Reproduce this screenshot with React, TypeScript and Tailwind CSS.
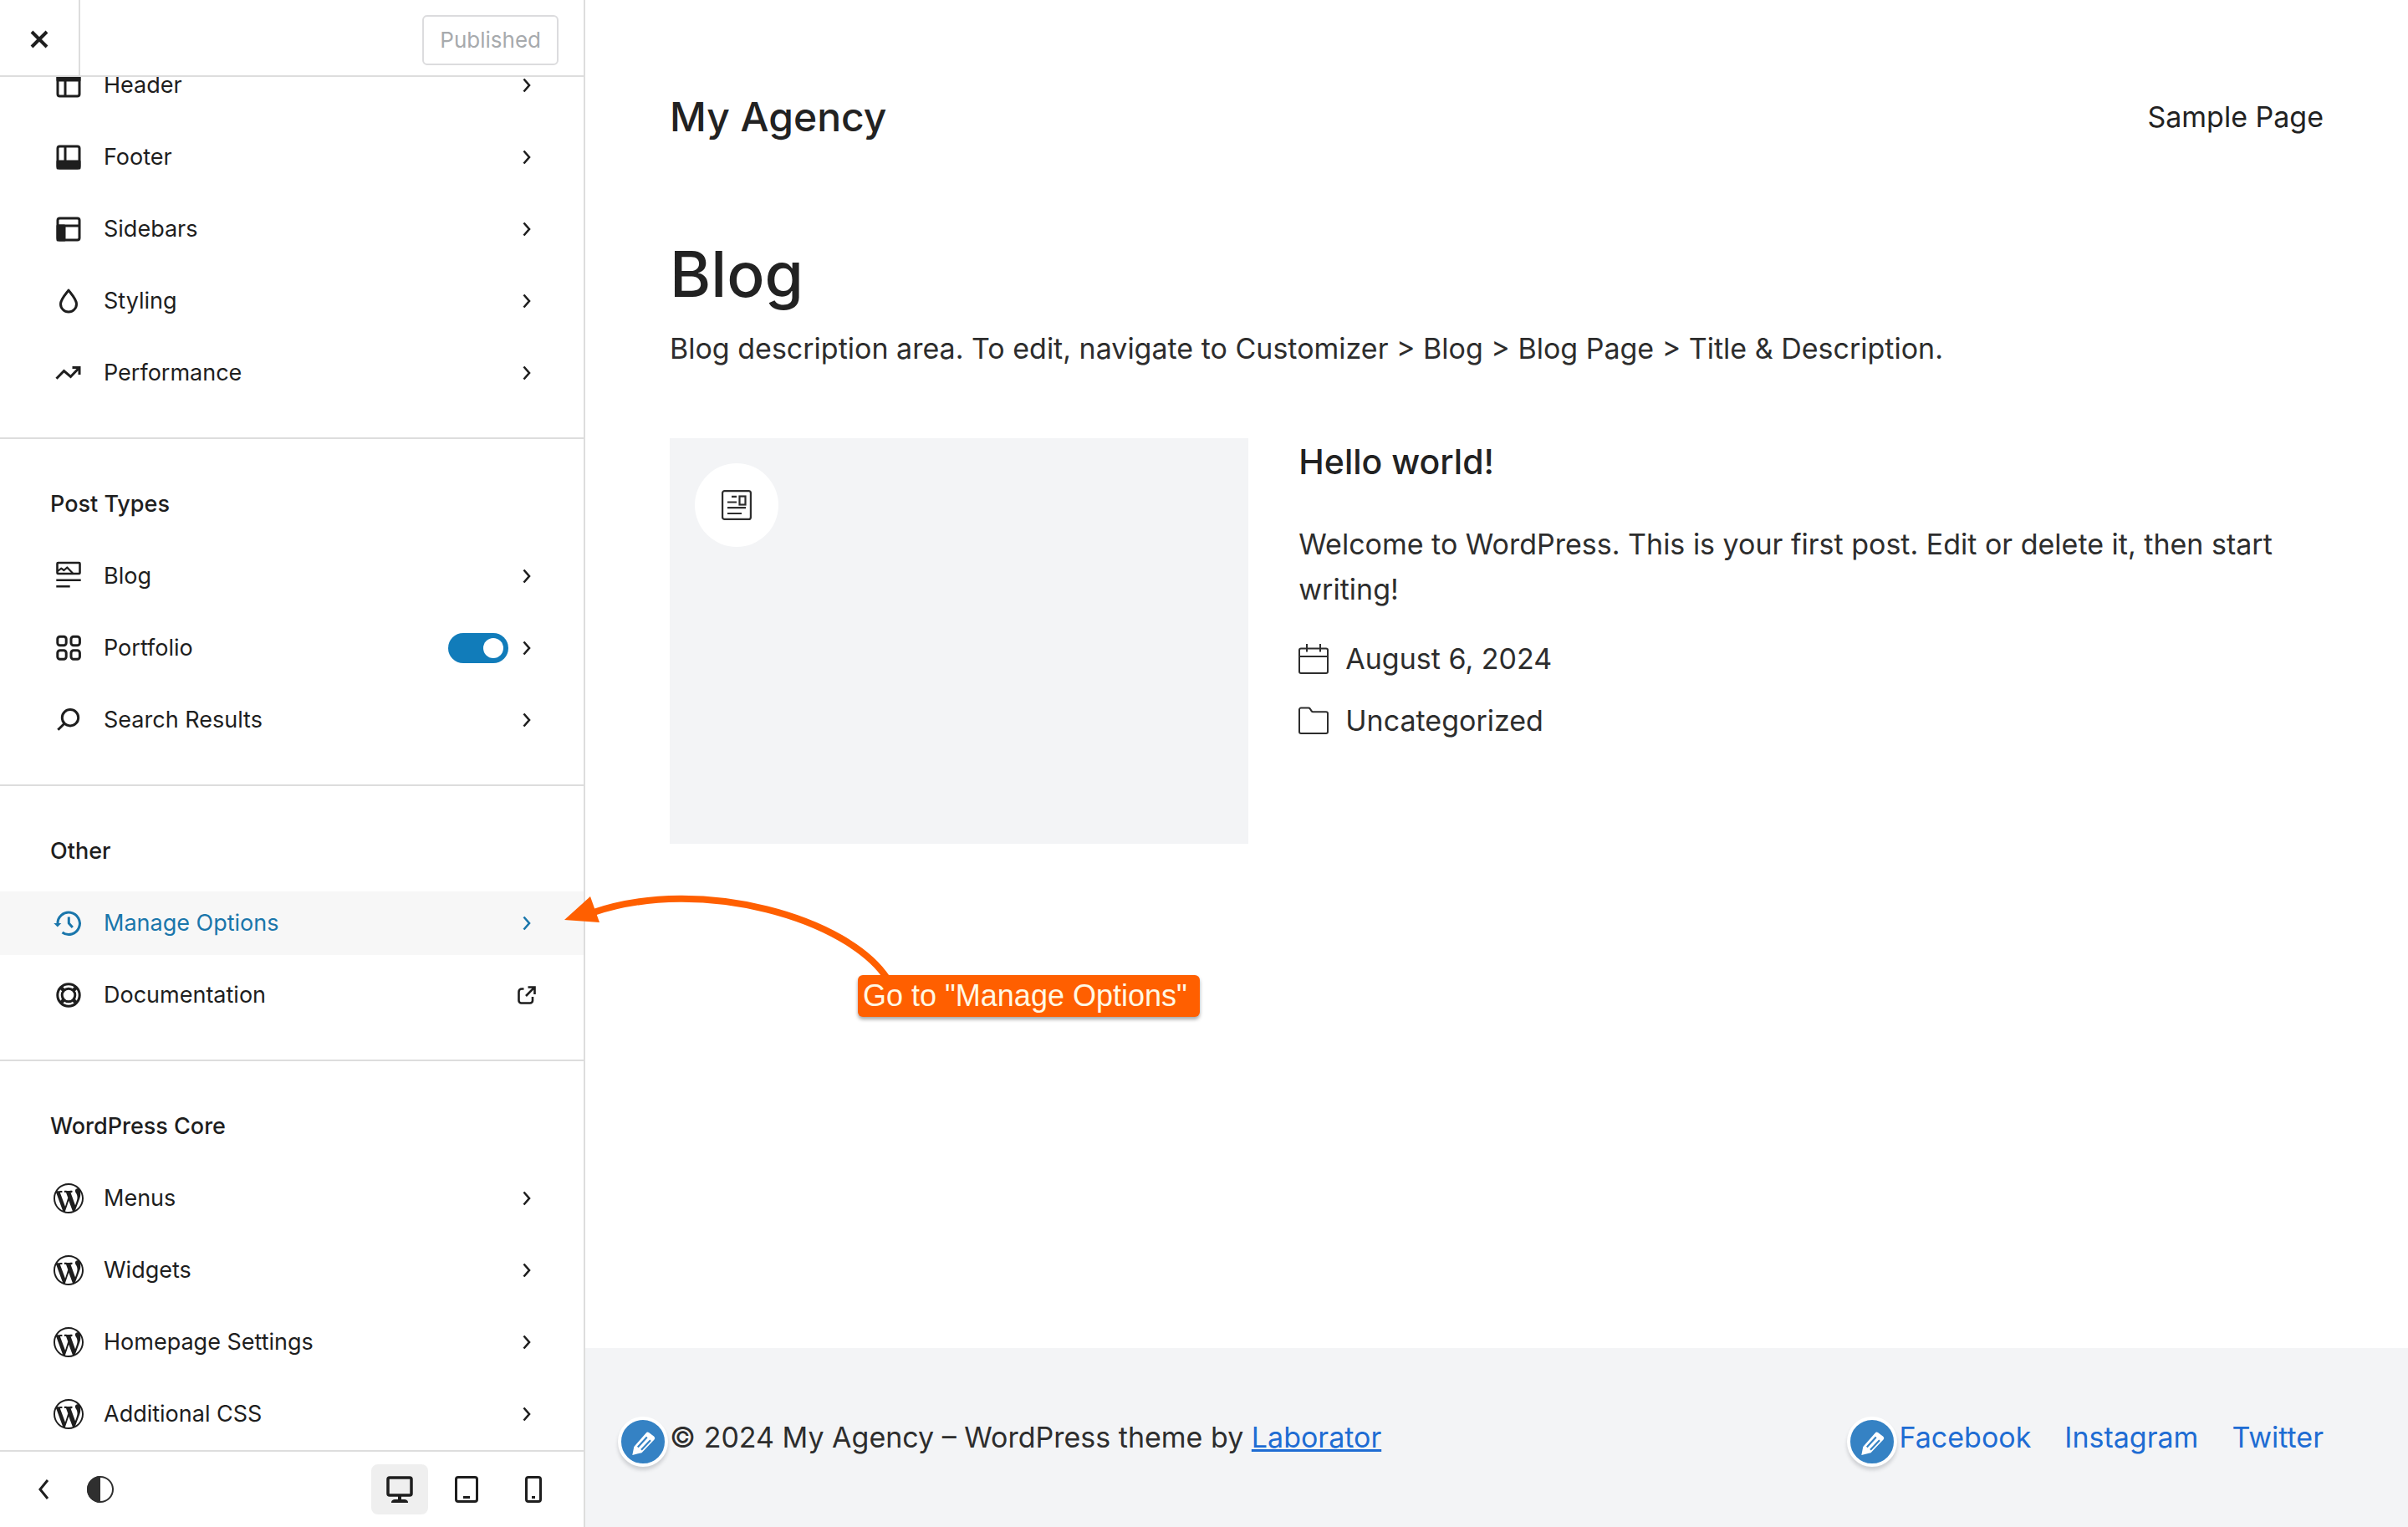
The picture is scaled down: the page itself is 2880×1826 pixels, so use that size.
import type { ReactNode } from "react";

function Glyph({ children }: { children: ReactNode }) {
  return (
    <svg
      viewBox="0 0 44 44"
      className="size-11 shrink-0"
      fill="none"
      stroke="currentColor"
      strokeWidth="3"
      strokeLinejoin="round"
      aria-hidden="true"
    >
      {children}
    </svg>
  );
}

const HeaderIcon = () => (
  <Glyph>
    <rect x="9" y="9" width="26" height="26" rx="2.5" />
    <rect x="9" y="9" width="26" height="7" fill="currentColor" />
    <path d="M18 16v19" />
  </Glyph>
);
const FooterIcon = () => (
  <Glyph>
    <rect x="9" y="9" width="26" height="26" rx="2.5" />
    <rect x="9" y="27" width="26" height="8" fill="currentColor" />
    <path d="M18 9v18" />
  </Glyph>
);
const SidebarIcon = () => (
  <Glyph>
    <rect x="9" y="9" width="26" height="26" rx="2.5" />
    <rect x="9" y="18" width="8" height="17" fill="currentColor" />
    <path d="M9 18h26" />
  </Glyph>
);
const DropIcon = () => (
  <Glyph>
    <path d="M22 9C20 12 12.500 19.500 12.500 25.500a9.500 9.500 0 0 0 19 0C31.500 19.500 24 12 22 9Z" />
  </Glyph>
);
const TrendIcon = () => (
  <Glyph>
    <path strokeLinejoin="miter" d="M7.500 28.800 16.500 19.500 24.500 26.500 34.500 16M26.500 15.500H35V24" />
  </Glyph>
);
const BlogIcon = () => (
  <Glyph>
    <rect x="8.500" y="6" width="27" height="13" rx="1" strokeWidth="2.600" />
    <path strokeWidth="2.200" d="m9 16 4.300-3.300 3.200 2.300 3.800-3.500 6.700 7" />
    <path strokeWidth="2.600" d="M7.300 26.700h29.400M7.300 34.300h16.400" />
  </Glyph>
);
const PortfolioIcon = () => (
  <Glyph>
    <rect x="8.800" y="8.300" width="10.400" height="10.400" rx="3" />
    <rect x="25" y="8.300" width="10.400" height="10.400" rx="3" />
    <rect x="8.800" y="24.800" width="10.400" height="10.400" rx="3" />
    <rect x="25" y="24.800" width="10.400" height="10.400" rx="3" />
  </Glyph>
);
const SearchIcon = () => (
  <Glyph>
    <circle cx="24" cy="19.200" r="9.700" />
    <path d="m17 26.200-7.700 7.500" />
  </Glyph>
);
const HistoryIcon = () => (
  <Glyph>
    <path d="M9 23a13.200 13.200 0 1 1 5.500 10M22.300 14.500v7.500l4.500 5" />
    <path d="M4.300 22h9l-4.500 4.600Z" fill="currentColor" stroke="none" />
  </Glyph>
);
const LifebuoyIcon = () => (
  <Glyph>
    <circle cx="22" cy="22" r="13.200" />
    <circle cx="22" cy="22" r="7.800" />
    <path strokeWidth="4.500" d="m13 13 3.500 3.500M31 13l-3.500 3.500M13 31l3.500-3.500M31 31l-3.500-3.500" />
  </Glyph>
);
const WordPressIcon = () => (
  <span className="flex size-11 shrink-0 items-center justify-center">
    <svg viewBox="0 0 20 20" className="size-9" fill="currentColor" aria-hidden="true">
      <path d="M20 10c0-5.510-4.490-10-10-10C4.480 0 0 4.490 0 10c0 5.520 4.480 10 10 10 5.510 0 10-4.480 10-10zM7.780 15.370L4.370 6.220c.55-.02 1.170-.08 1.170-.08.5-.06.44-1.130-.06-1.110 0 0-1.450.11-2.370.11-.18 0-.37 0-.58-.01C4.120 2.690 6.870 1.110 10 1.110c2.330 0 4.450.87 6.050 2.340-.68-.11-1.650.39-1.650 1.580 0 .74.45 1.360.9 2.100.35.61.55 1.360.55 2.460 0 1.490-1.400 5-1.400 5l-3.030-8.370c.54-.02.82-.17.82-.17.5-.05.44-1.250-.06-1.220 0 0-1.440.12-2.380.12-.87 0-2.330-.12-2.330-.12-.5-.03-.56 1.200-.06 1.220l.92.08 1.260 3.410zM17.410 10c.24-.64.74-1.870.43-4.250.7 1.290 1.050 2.710 1.050 4.250 0 3.290-1.730 6.240-4.400 7.780.97-2.590 1.940-5.200 2.920-7.780zM6.100 18.090C3.120 16.650 1.110 13.530 1.110 10c0-1.300.23-2.480.72-3.590C3.250 10.300 4.670 14.200 6.100 18.090zm4.030-6.630l2.580 6.980c-.86.29-1.760.45-2.710.45-.79 0-1.570-.11-2.290-.33.81-2.380 1.620-4.740 2.420-7.100z" />
    </svg>
  </span>
);
const Chevron = () => (
  <Glyph>
    <path d="m18.500 14.500 6.500 7.500-6.500 7.500" strokeLinejoin="miter" strokeWidth="2.600" />
  </Glyph>
);
const ExternalIcon = () => (
  <Glyph>
    <path
      strokeWidth="2.600"
      strokeLinejoin="miter"
      d="M18.500 14.500h-2.500a3.500 3.500 0 0 0-3.500 3.500v10.500a3 3 0 0 0 3 3h10.500a3 3 0 0 0 3-3V24M21 23 31 12.800M23.500 12.500h8V21"
    />
  </Glyph>
);

type Item = { label: string; icon: ReactNode; active?: boolean; toggle?: boolean; external?: boolean };
type Section = { title?: string; items: Item[] };

const sections: Section[] = [
  {
    items: [
      { label: "Header", icon: <HeaderIcon /> },
      { label: "Footer", icon: <FooterIcon /> },
      { label: "Sidebars", icon: <SidebarIcon /> },
      { label: "Styling", icon: <DropIcon /> },
      { label: "Performance", icon: <TrendIcon /> },
    ],
  },
  {
    title: "Post Types",
    items: [
      { label: "Blog", icon: <BlogIcon /> },
      { label: "Portfolio", icon: <PortfolioIcon />, toggle: true },
      { label: "Search Results", icon: <SearchIcon /> },
    ],
  },
  {
    title: "Other",
    items: [
      { label: "Manage Options", icon: <HistoryIcon />, active: true },
      { label: "Documentation", icon: <LifebuoyIcon />, external: true },
    ],
  },
  {
    title: "WordPress Core",
    items: [
      { label: "Menus", icon: <WordPressIcon /> },
      { label: "Widgets", icon: <WordPressIcon /> },
      { label: "Homepage Settings", icon: <WordPressIcon /> },
      { label: "Additional CSS", icon: <WordPressIcon /> },
    ],
  },
];

function Row({ item }: { item: Item }) {
  const body = (
    <>
      {item.icon}
      <span className="flex-1">{item.label}</span>
    </>
  );
  const row = "flex h-[76px] w-full items-center pl-[60px] pr-[46px] text-left";
  if (item.toggle) {
    return (
      <div className={row}>
        <button type="button" className="flex flex-1 items-center gap-5 text-left">
          {body}
        </button>
        <input
          type="checkbox"
          role="switch"
          defaultChecked
          aria-label={item.label}
          className="h-9 w-[72px] appearance-none rounded-full bg-gray-400 p-1.5 before:block before:size-6 before:rounded-full before:bg-white checked:bg-[#117cba] checked:before:ml-9"
        />
        <button type="button" aria-label={"Open " + item.label}>
          <Chevron />
        </button>
      </div>
    );
  }
  if (item.external) {
    return (
      <a href="#documentation" className={row + " gap-5"}>
        {body}
        <ExternalIcon />
      </a>
    );
  }
  return (
    <button type="button" className={row + " gap-5 " + (item.active ? "bg-[#f7f7f7] text-[#1a76ab]" : "")}>
      {body}
      <Chevron />
    </button>
  );
}

function Sidebar() {
  return (
    <aside className="flex w-[700px] shrink-0 flex-col border-r-2 border-[#dddddd] text-[27px] leading-9 text-[#1e1e1e]">
      <div className="flex h-[92px] shrink-0 items-center justify-between border-b-2 border-[#dddddd] pr-[30px]">
        <button
          type="button"
          aria-label="Close"
          className="flex w-24 items-center justify-center self-stretch border-r-2 border-[#dddddd] pt-1"
        >
          <svg viewBox="0 0 22 22" className="size-[22px]" fill="none" stroke="currentColor" strokeWidth="4" aria-hidden="true">
            <path d="m2 2 18 18M20 2 2 20" />
          </svg>
        </button>
        <button
          type="button"
          disabled
          className="mt-1.5 h-[60px] rounded-md border-2 border-[#dcdcde] px-[19px] text-[26px] text-[#a7aaad]"
        >
          Published
        </button>
      </div>

      <nav className="min-h-0 flex-1 overflow-hidden">
        <div className="-mt-7">
          {sections.map((section, i) => (
            <section
              key={i}
              className={
                i === 0 ? "flex flex-col gap-2.5 pb-[39px]" : "flex flex-col gap-2.5 border-t-2 border-[#dddddd] pb-[39px] pt-10"
              }
            >
              {section.title && (
                <h2 className="flex h-[76px] items-center pl-[60px] font-medium">{section.title}</h2>
              )}
              {section.items.map((item) => (
                <Row key={item.label} item={item} />
              ))}
            </section>
          ))}
        </div>
      </nav>

      <div className="flex h-[92px] shrink-0 items-center border-t-2 border-[#dddddd] pl-[30px] pr-[26px]">
        <button type="button" aria-label="Hide controls" className="mr-6">
          <Glyph>
            <path d="m27 11-9 11 9 11" strokeLinejoin="miter" />
          </Glyph>
        </button>
        <button type="button" aria-label="Colour scheme" className="text-[#2f2f2f]">
          <Glyph>
            <circle cx="22" cy="22" r="15" strokeWidth="2" />
            <path d="M22 6a16 16 0 0 0 0 32Z" fill="currentColor" stroke="none" />
          </Glyph>
        </button>
        <div className="ml-auto flex gap-3">
          <button
            type="button"
            aria-label="Desktop preview"
            aria-pressed="true"
            className="flex h-[60px] w-[68px] items-center justify-center rounded-lg bg-[#efefef]"
          >
            <Glyph>
              <rect x="8" y="8" width="28" height="21" rx="2" strokeWidth="3.500" />
              <path d="M22 29v6" strokeWidth="4" />
              <path d="M12 38c0-3 2-4 5-4h10c3 0 5 1 5 4Z" fill="currentColor" stroke="none" />
            </Glyph>
          </button>
          <button type="button" aria-label="Tablet preview" className="flex h-[60px] w-[68px] items-center justify-center">
            <Glyph>
              <rect x="9.500" y="7.500" width="25" height="29" rx="2.500" />
              <path d="M18 31.500h8" />
            </Glyph>
          </button>
          <button type="button" aria-label="Mobile preview" className="flex h-[60px] w-[68px] items-center justify-center">
            <Glyph>
              <rect x="13.500" y="7.500" width="17" height="29" rx="2.500" />
              <path d="M20 31.500h4" />
            </Glyph>
          </button>
        </div>
      </div>
    </aside>
  );
}

function EditShortcut({ label }: { label: string }) {
  return (
    <button
      type="button"
      aria-label={label}
      className="absolute -left-[62px] top-0.5 size-[60px] rounded-full border-4 border-white bg-[#3582c4] shadow-[0_4px_4px_rgba(60,67,74,0.2)]"
    >
      <svg viewBox="0 0 52 52" className="size-full" aria-hidden="true">
        <path
          fill="white"
          d="M13.300 42 15.300 32 29.800 15.500Q31 14 33 15L39 19.500Q41.200 21.500 39.500 23.500L24.500 39.200Z"
        />
        <path stroke="#3582c4" strokeWidth="2.200" fill="none" d="m19.800 32.500 11-12M24 35.800 35 24.200" />
      </svg>
    </button>
  );
}

function Preview() {
  return (
    <main className="flex flex-1 flex-col text-[34px] leading-[54px] text-[#2d2d2d]">
      <header className="flex items-center justify-between px-[101px] pt-[110px] text-[#222222]">
        <a href="#home" className="text-[48px] font-medium leading-[60px]">
          My Agency
        </a>
        <a href="#sample">Sample Page</a>
      </header>

      <div className="flex-1 px-[101px] pt-[110px]">
        <h1 className="text-[75px] font-medium leading-[96px] text-[#222222]">Blog</h1>
        <p className="mt-3.5">
          Blog description area. To edit, navigate to Customizer &gt; Blog &gt; Blog Page &gt; Title &amp; Description.
        </p>

        <article className="mt-20 flex items-start gap-[60px]">
          <div className="aspect-[10/7] w-[35%] shrink-0 bg-[#f3f4f6] p-[30px]">
            <div className="flex size-[100px] items-center justify-center rounded-full bg-white">
              <svg viewBox="0 0 36 36" className="size-9" fill="none" stroke="currentColor" strokeWidth="2.200" aria-hidden="true">
                <rect x="1.100" y="1.100" width="33.800" height="33.800" rx="2.500" />
                <rect x="21.500" y="7.500" width="7" height="10" />
                <path d="M12 7.800h6M7 14.500h11M7 21.200h22M7 28h17" />
              </svg>
            </div>
          </div>
          <div className="flex-1">
            <h2 className="text-[41px] font-medium leading-[56px] text-[#222222]">
              <a href="#hello-world">Hello world!</a>
            </h2>
            <p className="mt-11">Welcome to WordPress. This is your first post. Edit or delete it, then start writing!</p>
            <ul className="mt-[29px] flex flex-col gap-5">
              <li className="flex items-center gap-5">
                <svg viewBox="0 0 36 36" className="size-9" fill="none" stroke="currentColor" strokeWidth="2" aria-hidden="true">
                  <rect x="1" y="5.500" width="34" height="29.500" rx="2" />
                  <path d="M1 15h34M10 0v9.500M26 0v9.500" />
                </svg>
                August 6, 2024
              </li>
              <li className="flex items-center gap-5">
                <svg viewBox="0 0 36 36" className="size-9" fill="none" stroke="currentColor" strokeWidth="2" aria-hidden="true">
                  <path d="M1 4.500a2 2 0 0 1 2-2h9a2 2 0 0 1 1.700.900l2 3a2 2 0 0 0 1.600.900H33a2 2 0 0 1 2 2V31a2 2 0 0 1-2 2H3a2 2 0 0 1-2-2Z" />
                </svg>
                <a href="#uncategorized">Uncategorized</a>
              </li>
            </ul>
          </div>
        </article>
      </div>

      <footer className="flex justify-between bg-[#f3f4f6] px-[101px] py-20">
        <p className="relative">
          <EditShortcut label="Edit footer text" />© 2024 My Agency – WordPress theme by{" "}
          <a href="#laborator" className="text-[#1e6cd3] underline">
            Laborator
          </a>
        </p>
        <nav className="relative flex gap-10 text-[#1e6cd3]">
          <EditShortcut label="Edit social menu" />
          <a href="#facebook">Facebook</a>
          <a href="#instagram">Instagram</a>
          <a href="#twitter">Twitter</a>
        </nav>
      </footer>
    </main>
  );
}

export default function App() {
  return (
    <div className="relative flex h-screen overflow-hidden bg-white font-['Inter',sans-serif]">
      <Sidebar />
      <Preview />

      {/* Annotation pointing at the highlighted menu entry */}
      <svg
        viewBox="0 0 400 120"
        className="pointer-events-none absolute left-[670px] top-[1060px] h-[120px] w-[400px]"
        aria-hidden="true"
      >
        <path d="M391 110C345 39 170-13 40 31" fill="none" stroke="#ff5f00" strokeWidth="8" />
        <path d="M5 40 36 12 47 43Z" fill="#ff5f00" />
      </svg>
      <div className="absolute left-[1026px] top-[1166px] w-[409px] rounded-md bg-[#ff5f00] px-1.5 font-['Liberation_Sans',sans-serif] text-[36px] leading-[50px] text-[#fff8e4] shadow-[0_3px_4px_rgba(0,0,0,0.35)]">
        Go to &quot;Manage Options&quot;
      </div>
    </div>
  );
}
